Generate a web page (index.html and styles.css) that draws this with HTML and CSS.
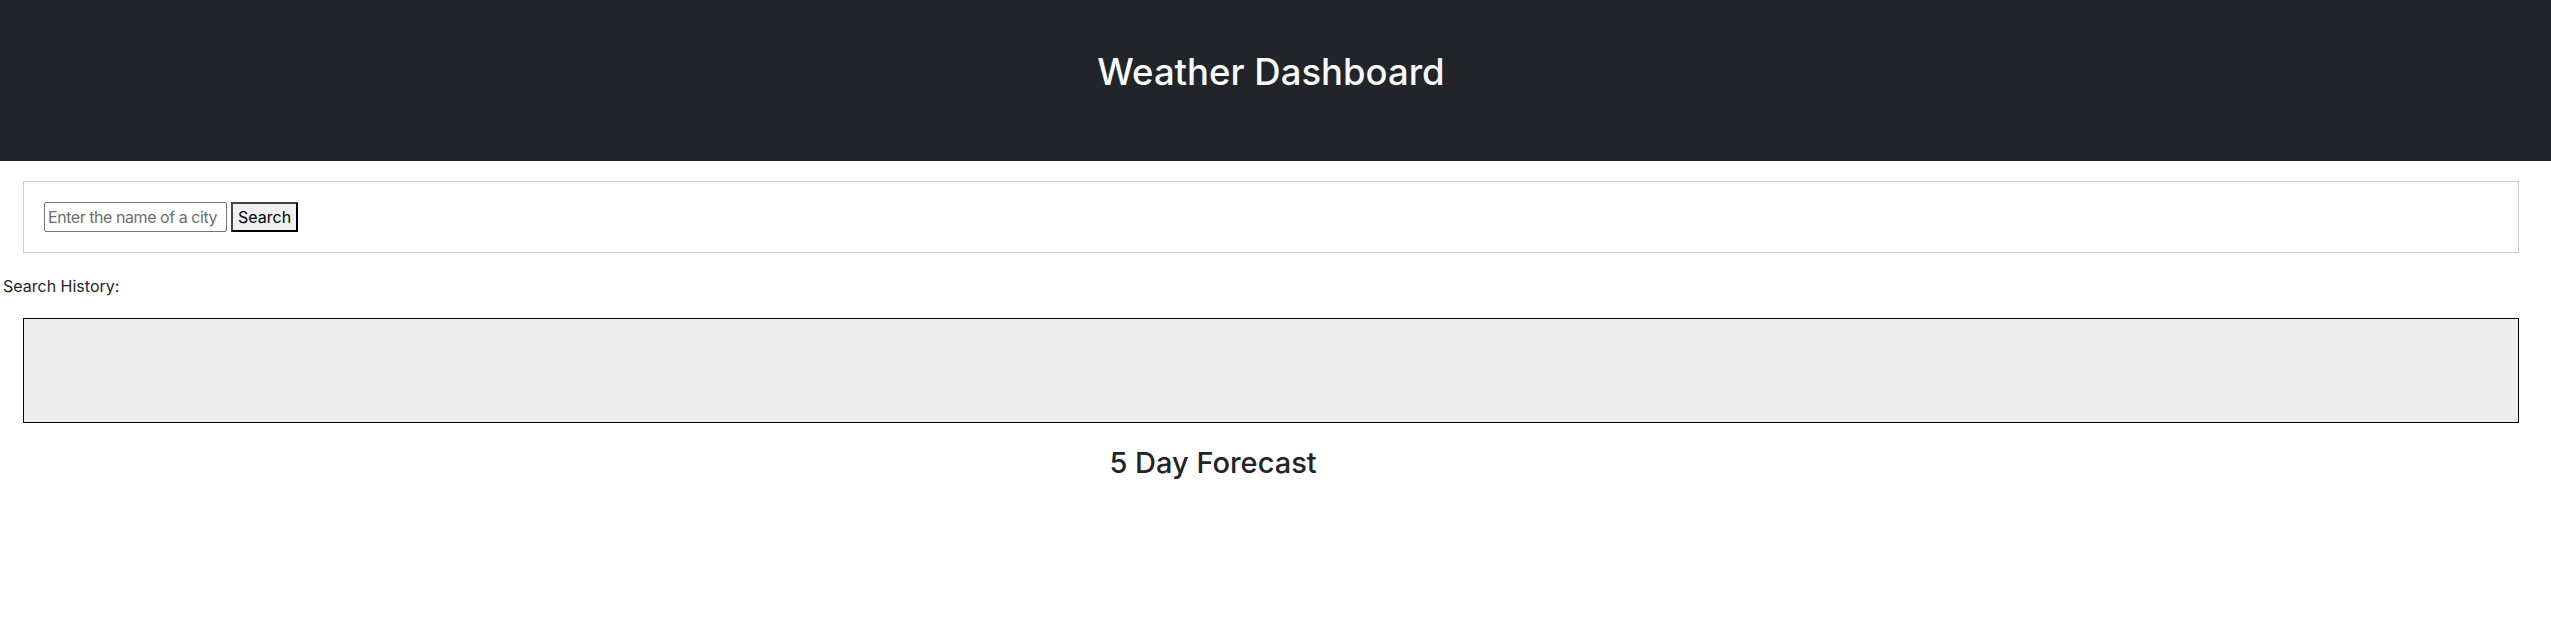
FILE: index.html
```html
<!DOCTYPE html>
<html lang="en">
<head>
<meta charset="utf-8">
<title>Weather Dashboard</title>
<link rel="stylesheet" href="styles.css">
</head>
<body>
<header class="hero">
  <h1 class="hero-title">Weather Dashboard</h1>
</header>
<main>
  <section class="search-card">
    <form class="search-form">
      <input class="city-input" type="text" placeholder="Enter the name of a city">
      <button class="search-btn" type="button">Search</button>
    </form>
  </section>
  <p class="history-label">Search History:</p>
  <div class="history-box"></div>
  <h2 class="forecast-title">5 Day Forecast</h2>
</main>
</body>
</html>
```
FILE: styles.css
```css
* { box-sizing: border-box; }
body {
  margin: 0;
  font-family: Inter, "Noto Sans", "DejaVu Sans", sans-serif;
  color: #212529;
  background: #fff;
  font-size: 16px;
  line-height: 1.5;
}
.hero {
  background: #212529;
  height: 161px;
  padding-top: 51px;
  padding-right: 9px;
}
.hero-title {
  margin: 0;
  text-align: center;
  color: #f8f9fa;
  font-size: 36.5px;
  font-weight: 500;
  line-height: 1.2;
}
.search-card {
  margin: 20px 32px 0 23px;
  border: 1px solid #ccc;
  padding: 20px;
}
.search-form {
  display: flex;
  gap: 4px;
  margin: 0;
}
.city-input {
  font-family: inherit;
  font-size: 16px;
  letter-spacing: -0.45px;
  width: 183px;
  height: 30px;
  padding: 1px 3px;
  border: 1px solid #767676;
  border-radius: 2px;
  color: #212529;
}
.city-input::placeholder { color: #6e6e6e; }
.search-btn {
  font-family: inherit;
  font-size: 16px;
  height: 30px;
  padding: 0 5px;
  background: #efefef;
  color: #000;
  border: 2px solid #000;
  border-color: #444 #000 #000 #444;
}
.history-label {
  margin: 21px 0 0;
  padding-left: 3px;
}
.history-box {
  margin: 20px 32px 0 23px;
  height: 105px;
  border: 1px solid #000;
  background: #ededed;
}
.forecast-title {
  margin: 23px 0 0;
  padding-right: 125px;
  text-align: center;
  font-size: 29px;
  font-weight: 500;
  line-height: 1.2;
}
```
